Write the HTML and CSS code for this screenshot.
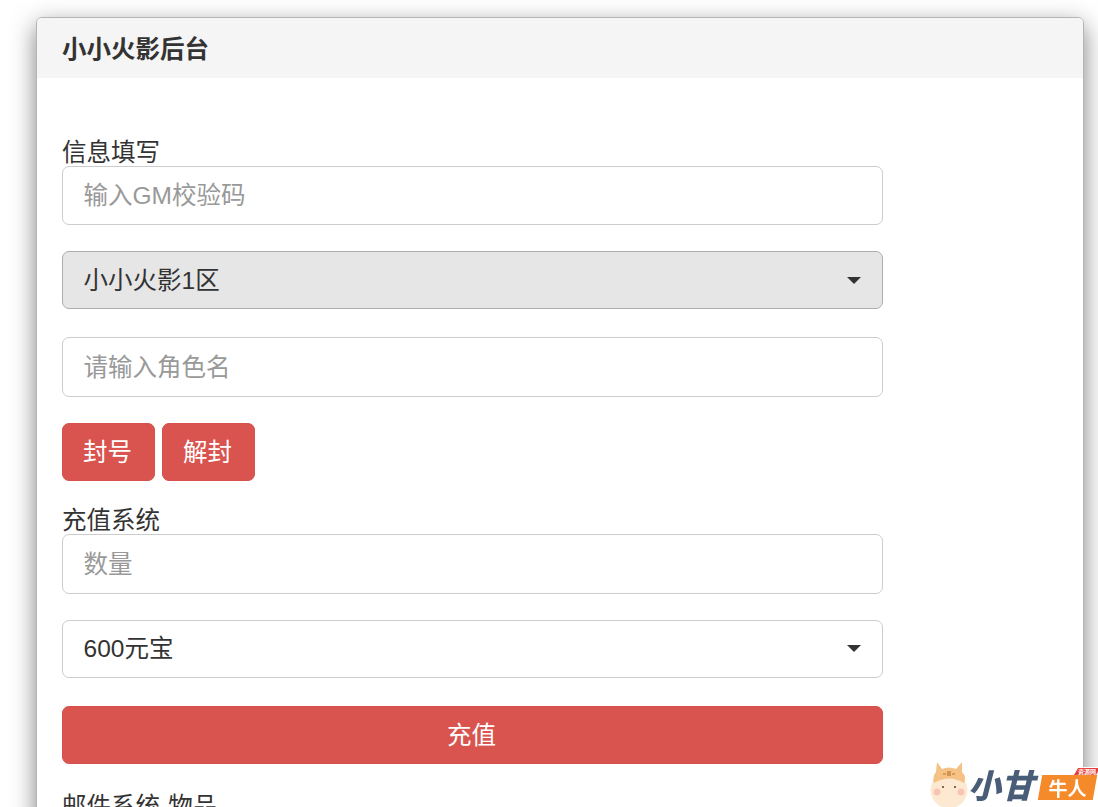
FILE: index.html
```html
<!DOCTYPE html>
<html lang="zh-CN">
<head>
<meta charset="utf-8">
<title>小小火影后台</title>
<link rel="stylesheet" href="styles.css">
</head>
<body>
<div class="panel">
  <div class="panel-heading">小小火影后台</div>
  <div class="panel-body">
    <div class="form">
      <label class="label">信息填写</label>
      <input class="control h59 mb26" placeholder="输入GM校验码">
      <div class="control select disabled h58 mb28"><span>小小火影1区</span><i class="caret"></i></div>
      <input class="control h60 mb26 nudge" placeholder="请输入角色名">
      <div class="btn-row">
        <button class="btn">封号</button>
        <button class="btn">解封</button>
      </div>
      <label class="label">充值系统</label>
      <input class="control h60 mb26 nudge" placeholder="数量">
      <div class="control select h58 mb28"><span>600元宝</span><i class="caret"></i></div>
      <button class="btn block">充值</button>
      <label class="label">邮件系统-物品</label>
    </div>
  </div>
</div>
<div class="logo">
  <svg class="cow" width="42" height="46" viewBox="0 0 42 46">
    <circle cx="19" cy="28" r="18.5" fill="#fde9d2"/>
    <path d="M6 10 L7 0 L12 7 Q19 4 26 7 L32 0 L32 10 Q37 15 34 21 Q19 12 4 21 Q2 15 6 10Z" fill="#f6c184"/>
    <path d="M13 12h3M22 12h3M18 9v5M20 9v5" stroke="#b7792f" stroke-width="1.2" fill="none"/>
    <circle cx="13" cy="25" r="1.1" fill="#6a4a32"/>
    <circle cx="25" cy="25" r="1.1" fill="#6a4a32"/>
    <circle cx="7" cy="30" r="3.5" fill="#f8c4b4"/>
    <circle cx="31" cy="30" r="3.5" fill="#f8c4b4"/>
  </svg>
  <span class="logo-name">小甘</span>
  <span class="logo-tag"><b class="logo-tag-text">牛人</b></span>
  <span class="logo-mini"><b class="logo-mini-text">资源网</b></span>
</div>
</body>
</html>
```
FILE: styles.css
```css
* { box-sizing: border-box; }
html, body { margin: 0; height: 807px; overflow: hidden; background: #fff; }
body {
  font-family: "Liberation Sans", "Noto Sans CJK SC", sans-serif;
  font-size: 24.5px;
  color: #333;
  padding: 17px 14px 0 36px;
}
.panel {
  border-radius: 6px;
  background: #fff;
  border: 1px solid #b5b5b5;
  box-shadow: 0 8px 24px rgba(0,0,0,.5);
  height: 1000px;
}
.panel-heading {
  height: 60px;
  padding: 0 25px;
  background: #f5f5f5;
  border-radius: 5px 5px 0 0;
  font-weight: 700;
  font-size: 24.5px;
  line-height: 63px;
}
.panel-body { padding: 60px 25px 0; }
.form { width: 821px; display: flex; flex-direction: column; align-items: stretch; }
.label { display: block; height: 28px; line-height: 30px; }
.control {
  display: block;
  width: 100%;
  border: 1px solid #ccc;
  border-radius: 7px;
  background: #fff;
  padding: 0 21px 0 20.5px;
  font: inherit;
  color: #333;
  outline: none;
}
.nudge { padding-top: 2px; }
.control::placeholder { color: #999; opacity: 1; }
.h58 { height: 58px; }
.h59 { height: 59px; }
.h60 { height: 60px; }
.mb26 { margin-bottom: 26px; }
.mb28 { margin-bottom: 28px; }
.select { display: flex; align-items: center; justify-content: space-between; padding-bottom: 3px; }
.select.h58:not(.disabled) { padding-bottom: 5px; }
.disabled { background: #e6e6e6; border-color: #adadad; }
.caret {
  width: 0; height: 0;
  margin-top: 3px;
  border-top: 7px solid #333;
  border-left: 7px solid transparent;
  border-right: 7px solid transparent;
}
.btn-row { display: flex; gap: 7px; margin-bottom: 25px; }
.btn {
  height: 58px;
  width: 93px;
  padding: 0 2px 4px 0;
  border: 1px solid #d6504c;
  border-radius: 7px;
  background: #d9534f;
  color: #fff;
  font: inherit;
}
.block { width: 100%; margin-bottom: 28px; }
.logo {
  position: fixed;
  left: 925px;
  top: 767px;
  width: 173px;
  height: 40px;
  background: #fff;
}
.cow { position: absolute; left: 5px; top: -5px; }
.logo-name {
  position: absolute;
  left: 43px;
  top: -3px;
  font: italic 900 33px/40px "Noto Sans CJK SC", sans-serif;
  color: #4a5d78;
}
.logo-tag {
  position: absolute;
  left: 115px;
  top: 8px;
  width: 55px;
  height: 25px;
  background: #f58a2b;
  transform: skewX(-10deg);
  text-align: center;
}
.logo-tag-text {
  display: block;
  font: 700 19px/25px "Noto Sans CJK SC", sans-serif;
  color: #fff;
  transform: skewX(10deg);
}
.logo-mini {
  position: absolute;
  left: 151px;
  top: 1px;
  width: 22px;
  height: 7px;
  background: #e8413b;
  transform: skewX(-30deg);
  text-align: center;
}
.logo-mini-text {
  display: block;
  color: #fff;
  font: 700 6px/7px "Noto Sans CJK SC", sans-serif;
  transform: skewX(30deg);
}
```
